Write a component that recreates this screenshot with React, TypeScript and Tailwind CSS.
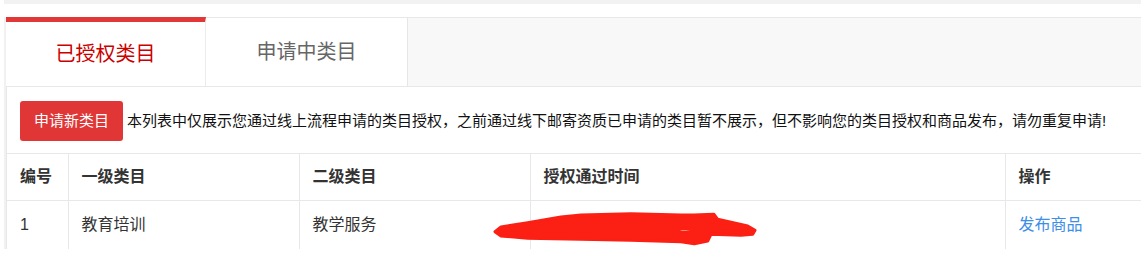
import React from 'react'

const rows = [
    { id: '1', first: '教育培训', second: '教学服务' },
]

function Scribble() {
    return (
        <svg
            className="absolute left-[-38px] top-[11px] pointer-events-none"
            width="266"
            height="34"
            viewBox="0 0 266 34"
        >
            <path
                fillRule="evenodd"
                fill="#fb1f14"
                stroke="#fb1f14"
                strokeWidth="3"
                strokeLinejoin="round"
                d="M2,19.7 L8,15 L34.7,10.7 L68,5 L88,3 L138,1.7 L188,3 L201,3 L221,2.3 L224.7,7.3 L254.7,14 L262,18.3 L259.7,22.3 L248,23.3 L218,22.3 L214.7,29 L201.3,31.7 L188,29.7 L138,28.3 L88,27.3 L34.7,26.3 L8,24 Z M183,18 L190,16.5 L200,17.5 L196,20 L186,20.3 Z M216,12.5 L252,15.6 L219,16 Z"
            />
        </svg>
    )
}

export default function App() {
    return (
        <div className="w-[1141px] h-[261px] bg-white overflow-hidden font-['Liberation_Sans','Noto_Sans_CJK_SC',sans-serif]">
            <div className="ml-[4px] h-[4px] bg-[#f2f2f2]" />
            <div className="h-[13px]" />
            <div className="ml-[4px] border-l-2 border-[#f1f1f1]">
                {/* tabs */}
                <div className="flex h-[69px] border-t border-[#e8e8e8]">
                    <div className="-mt-px w-[200px] bg-white border-t-[5px] border-[#e23737] border-r border-r-[#ececec] flex items-center justify-center text-[20px] text-[#cc0000]">
                        已授权类目
                    </div>
                    <div className="w-[202px] bg-white border-r border-[#e6e6e6] flex items-center justify-center text-[20px] text-[#666]">
                        申请中类目
                    </div>
                    <div className="flex-1 bg-[#f8f8f8]" />
                </div>

                {/* panel */}
                <div className="border-t border-l border-[#e8e8e8] bg-white">
                    <div className="flex items-center pt-[14px] pl-[13px]">
                        <button className="w-[103px] h-[40px] rounded-[3px] bg-[#e03636] text-white text-[15px]">
                            申请新类目
                        </button>
                        <p className="ml-[4px] text-[15px] text-[#111] whitespace-nowrap">
                            本列表中仅展示您通过线上流程申请的类目授权，之前通过线下邮寄资质已申请的类目暂不展示，但不影响您的类目授权和商品发布，请勿重复申请!
                        </p>
                    </div>

                    <table className="mt-[12px] w-[1135px] table-fixed border-collapse text-[16px] text-[#333]">
                        <colgroup>
                            <col className="w-[61px]" />
                            <col className="w-[231px]" />
                            <col className="w-[231px]" />
                            <col className="w-[475px]" />
                            <col />
                        </colgroup>
                        <thead>
                            <tr className="h-[47px] border-t border-[#e8e8e8] text-left">
                                <th className="pl-[13px] font-bold">编号</th>
                                <th className="pl-[13px] font-bold border-l border-[#e8e8e8]">一级类目</th>
                                <th className="pl-[13px] font-bold border-l border-[#e8e8e8]">二级类目</th>
                                <th className="pl-[13px] font-bold border-l border-[#e8e8e8]">授权通过时间</th>
                                <th className="pl-[13px] font-bold border-l border-[#e8e8e8]">操作</th>
                            </tr>
                        </thead>
                        <tbody>
                            {rows.map((r) => (
                                <tr key={r.id} className="h-[48px] border-t border-[#e8e8e8]">
                                    <td className="pl-[13px]">{r.id}</td>
                                    <td className="pl-[13px] border-l border-[#e8e8e8]">{r.first}</td>
                                    <td className="pl-[13px] border-l border-[#e8e8e8]">{r.second}</td>
                                    <td className="relative pl-[13px] border-l border-[#e8e8e8]">
                                        <Scribble />
                                    </td>
                                    <td className="pl-[13px] border-l border-[#e8e8e8]">
                                        <a className="text-[#3d8ee8]">发布商品</a>
                                    </td>
                                </tr>
                            ))}
                        </tbody>
                    </table>
                </div>
            </div>
        </div>
    )
}
